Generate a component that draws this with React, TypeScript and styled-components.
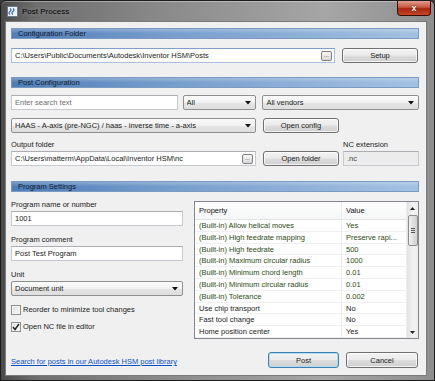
import styled, { createGlobalStyle } from "styled-components";

const GlobalStyle = createGlobalStyle`
  html, body {
    margin: 0;
    padding: 0;
    background: #3a3a3a;
  }
  body {
    font-family: "Liberation Sans", Arial, sans-serif;
    font-size: 7.5px;
    color: #1b1b1b;
  }
  * { box-sizing: border-box; }
`;

const Window = styled.div`
  width: 435px;
  height: 381px;
  display: flex;
  flex-direction: column;
  border: 1px solid #1c1c1c;
  border-radius: 6px 6px 0 0;
  background: linear-gradient(90deg, #4a4a4a 0%, #6e6e6e 8%, #8c8c8c 40%, #a6a6a6 75%, #8e8e8e 100%);
  box-shadow: inset 0 1px 0 rgba(255, 255, 255, 0.35);
`;

const TitleBar = styled.div`
  height: 20px;
  display: flex;
  align-items: center;
  padding-left: 6px;
`;

const Title = styled.span`
  font-size: 8px;
  color: #000;
  margin-left: 4px;
  text-shadow: 0 0 4px rgba(255, 255, 255, 0.35);
`;

const CloseButton = styled.div`
  margin-left: auto;
  margin-right: 3px;
  align-self: flex-start;
  width: 34px;
  height: 15px;
  border: 1px solid #3c0a04;
  border-top: none;
  border-radius: 0 0 4px 4px;
  background: linear-gradient(#e0a090 0%, #c8553c 45%, #a8250e 55%, #c44a2a 100%);
  color: #fff;
  font-weight: bold;
  font-size: 9px;
  display: flex;
  align-items: center;
  justify-content: center;
  text-shadow: 0 0 2px #400;
`;

const Client = styled.div`
  flex: 1;
  margin: 0 7px 4px 4px;
  background: #f0f0f0;
  border: 1px solid #7a7a7a;
  padding: 6px 7px 0 5px;
  display: flex;
  flex-direction: column;
`;

const SectionHeader = styled.div<{ $mt?: number }>`
  height: 11px;
  line-height: 10px;
  padding-left: 6px;
  margin-top: ${(p) => p.$mt ?? 0}px;
  color: #0f1a2a;
  border: 1px solid #7b9ac2;
  background:
    linear-gradient(rgba(255, 255, 255, 0.25), rgba(255, 255, 255, 0) 50%),
    linear-gradient(90deg, #4f7db8 0%, #789ecd 40%, #a4c1e1 100%);
`;

const Row = styled.div<{ $mt?: number; $gap?: number }>`
  display: flex;
  align-items: flex-end;
  gap: ${(p) => p.$gap ?? 7}px;
  margin-top: ${(p) => p.$mt ?? 0}px;
`;

const Field = styled.div<{ $w: number }>`
  width: ${(p) => p.$w}px;
  display: flex;
  flex-direction: column;
`;

const Label = styled.div<{ $mt?: number }>`
  height: 11px;
  line-height: 10px;
  margin-top: ${(p) => p.$mt ?? 0}px;
  white-space: nowrap;
`;

const Box = styled.div<{ $w?: number; $tint?: boolean; $disabled?: boolean }>`
  width: ${(p) => (p.$w ? `${p.$w}px` : "100%")};
  height: 15px;
  display: flex;
  align-items: center;
  padding: 0 2px 0 3px;
  background: ${(p) => (p.$disabled ? "#ececec" : "#fff")};
  border: 1px solid ${(p) => (p.$tint ? "#a9c1dc" : "#c6cad0")};
  border-top-color: ${(p) => (p.$tint ? "#7f9fc6" : "#abadb3")};
  color: ${(p) => (p.$disabled ? "#444" : "#1b1b1b")};
  white-space: nowrap;
  overflow: hidden;
`;

const Placeholder = styled.span`
  color: #6d6d6d;
`;

const Grow = styled.span`
  flex: 1;
  min-width: 0;
  overflow: hidden;
`;

const BrowseButton = styled.span`
  width: 11px;
  height: 10px;
  border: 1px solid #7d7d7d;
  border-radius: 2px;
  background: linear-gradient(#f7f7f7, #d9d9d9);
  font-size: 6px;
  line-height: 6px;
  text-align: center;
  color: #333;
  flex: none;
`;

const Combo = styled.div<{ $w: number }>`
  width: ${(p) => p.$w}px;
  height: 15px;
  display: flex;
  align-items: center;
  padding: 0 4px 0 3px;
  border: 1px solid #8e8f8f;
  border-radius: 2px;
  background: linear-gradient(#fbfbfb 0%, #f1f1f1 50%, #e5e5e5 51%, #dedede 100%);
  white-space: nowrap;
`;

const Arrow = () => (
  <svg width="6" height="4" viewBox="0 0 6 4" style={{ flex: "none" }}>
    <path d="M0 0h6L3 3.5z" fill="#111" />
  </svg>
);

const Button = styled.button<{ $w: number; $primary?: boolean; $h?: number }>`
  width: ${(p) => p.$w}px;
  height: ${(p) => p.$h ?? 15}px;
  padding: 0;
  font: inherit;
  color: #1b1b1b;
  border: 1px solid ${(p) => (p.$primary ? "#3c7fb1" : "#707070")};
  border-radius: 3px;
  background: linear-gradient(#f2f2f2 0%, #ebebeb 48%, #dddddd 52%, #cfcfcf 100%);
  box-shadow: inset 0 0 0 1px ${(p) => (p.$primary ? "rgba(170, 220, 245, 0.9)" : "rgba(255, 255, 255, 0.75)")};
  flex: none;
`;

const Settings = styled.div`
  display: flex;
  justify-content: space-between;
  margin-top: 8px;
`;

const LeftColumn = styled.div`
  width: 172px;
  display: flex;
  flex-direction: column;
`;

const CheckRow = styled.label<{ $mt: number }>`
  display: flex;
  align-items: center;
  gap: 2px;
  height: 11px;
  margin-top: ${(p) => p.$mt}px;
`;

const CheckBox = styled.span`
  width: 10px;
  height: 10px;
  border: 1px solid #8f8f8f;
  background: linear-gradient(135deg, #dcdcdc, #fbfbfb);
  box-shadow: inset 0 0 0 1px #f4f4f4;
  display: flex;
  align-items: center;
  justify-content: center;
`;

const Table = styled.div`
  width: 225px;
  height: 138px;
  margin-top: 1px;
  border: 1px solid #828790;
  background: #fff;
  display: flex;
  overflow: hidden;
`;

const Columns = styled.div`
  flex: 1;
  min-width: 0;
  display: flex;
  flex-direction: column;
`;

const HeadRow = styled.div`
  height: 18px;
  display: flex;
  align-items: center;
  border-bottom: 1px solid #e3e3e3;
  background: linear-gradient(#ffffff, #f5f6f7);
  color: #111;
`;

const DataRow = styled.div<{ $builtin?: boolean }>`
  height: 11.8px;
  display: flex;
  align-items: center;
  border-bottom: 1px solid #f0f0f0;
  color: ${(p) => (p.$builtin ? "#2c4a12" : "#1b1b1b")};
`;

const Cell = styled.div<{ $w?: number }>`
  ${(p) => (p.$w ? `width: ${p.$w}px; flex: none;` : "flex: 1; min-width: 0;")}
  padding: 0 3px 0 4px;
  white-space: nowrap;
  overflow: hidden;
  align-self: stretch;
  line-height: 11px;
  border-right: ${(p) => (p.$w ? "1px solid #ececec" : "none")};
`;

const HeadCell = styled(Cell)`
  line-height: 17px;
`;

const ScrollBar = styled.div`
  width: 12px;
  flex: none;
  display: flex;
  flex-direction: column;
  align-items: center;
  background: linear-gradient(90deg, #e3e3e3, #f3f3f3 60%, #ececec);
  border-left: 1px solid #ececec;
`;

const ScrollArrow = styled.div<{ $mt?: string }>`
  height: 12px;
  display: flex;
  align-items: center;
  justify-content: center;
  margin-top: ${(p) => p.$mt ?? "0"};
`;

const Thumb = styled.div`
  margin-top: 1px;
  width: 10px;
  height: 31px;
  border: 1px solid #8d8d8d;
  border-radius: 2px;
  background: linear-gradient(90deg, #f1f1f1, #e0e0e0 50%, #d2d2d2);
  display: flex;
  flex-direction: column;
  align-items: center;
  justify-content: center;
  gap: 1px;
`;

const Grip = styled.span`
  width: 4px;
  height: 1px;
  background: #555;
`;

const Footer = styled.div`
  margin-top: auto;
  margin-bottom: 7px;
  display: flex;
  align-items: center;
`;

const Link = styled.a`
  color: #0a50c8;
  text-decoration: underline;
  padding-top: 3px;
  cursor: pointer;
`;

const FooterButtons = styled.div`
  margin-left: auto;
  margin-right: 1px;
  display: flex;
  gap: 7px;
`;

const AppIcon = () => (
  <svg width="11" height="11" viewBox="0 0 11 11">
    <rect x="0.5" y="0.5" width="10" height="10" fill="#eef3fb" stroke="#6a7a90" />
    <path d="M3 2.5q2 1.5 0 3t0 3M6 2.5q2 1.5 0 3t0 3" stroke="#2f62c8" strokeWidth="1.2" fill="none" />
  </svg>
);

const properties: { name: string; value: string; builtin?: boolean }[] = [
  { name: "(Built-in) Allow helical moves", value: "Yes", builtin: true },
  { name: "(Built-in) High feedrate mapping", value: "Preserve rapi...", builtin: true },
  { name: "(Built-in) High feedrate", value: "500", builtin: true },
  { name: "(Built-in) Maximum circular radius", value: "1000", builtin: true },
  { name: "(Built-in) Minimum chord length", value: "0.01", builtin: true },
  { name: "(Built-in) Minimum circular radius", value: "0.01", builtin: true },
  { name: "(Built-in) Tolerance", value: "0.002", builtin: true },
  { name: "Use chip transport", value: "No" },
  { name: "Fast tool change", value: "No" },
  { name: "Home position center", value: "Yes" },
];

function App() {
  return (
    <>
      <GlobalStyle />
      <Window>
        <TitleBar>
          <AppIcon />
          <Title>Post Process</Title>
          <CloseButton>x</CloseButton>
        </TitleBar>
        <Client>
          <SectionHeader>Configuration Folder</SectionHeader>
          <Row $mt={9}>
            <Box $w={324} $tint>
              <Grow>C:\Users\Public\Documents\Autodesk\Inventor HSM\Posts</Grow>
              <BrowseButton>...</BrowseButton>
            </Box>
            <Button $w={76}>Setup</Button>
          </Row>

          <SectionHeader $mt={14}>Post Configuration</SectionHeader>
          <Row $mt={7} $gap={5}>
            <Box $w={167}>
              <Placeholder>Enter search text</Placeholder>
            </Box>
            <Combo $w={74}>
              <Grow>All</Grow>
              <Arrow />
            </Combo>
            <Combo $w={157} style={{ marginLeft: 1 }}>
              <Grow>All vendors</Grow>
              <Arrow />
            </Combo>
          </Row>
          <Row $mt={8}>
            <Combo $w={245}>
              <Grow>HAAS - A-axis (pre-NGC) / haas - inverse time - a-axis</Grow>
              <Arrow />
            </Combo>
            <Button $w={76}>Open config</Button>
          </Row>
          <Row $mt={7}>
            <Field $w={245}>
              <Label>Output folder</Label>
              <Box>
                <Grow>C:\Users\matterm\AppData\Local\Inventor HSM\nc</Grow>
                <BrowseButton>...</BrowseButton>
              </Box>
            </Field>
            <Button $w={76}>Open folder</Button>
            <Field $w={76} style={{ marginLeft: -3 }}>
              <Label>NC extension</Label>
              <Box $disabled>.nc</Box>
            </Field>
          </Row>

          <SectionHeader $mt={15}>Program Settings</SectionHeader>
          <Settings>
            <LeftColumn>
              <Label>Program name or number</Label>
              <Box>1001</Box>
              <Label $mt={9}>Program comment</Label>
              <Box>Post Test Program</Box>
              <Label $mt={9}>Unit</Label>
              <Combo $w={172}>
                <Grow>Document unit</Grow>
                <Arrow />
              </Combo>
              <CheckRow $mt={8}>
                <CheckBox />
                Reorder to minimize tool changes
              </CheckRow>
              <CheckRow $mt={6}>
                <CheckBox>
                  <svg width="8" height="8" viewBox="0 0 8 8">
                    <path d="M1 4l2 2.5L7 1" stroke="#222" strokeWidth="1.4" fill="none" />
                  </svg>
                </CheckBox>
                Open NC file in editor
              </CheckRow>
            </LeftColumn>
            <Table>
              <Columns>
                <HeadRow>
                  <HeadCell $w={147}>Property</HeadCell>
                  <HeadCell>Value</HeadCell>
                </HeadRow>
                {properties.map((p) => (
                  <DataRow key={p.name} $builtin={p.builtin}>
                    <Cell $w={147}>{p.name}</Cell>
                    <Cell>{p.value}</Cell>
                  </DataRow>
                ))}
              </Columns>
              <ScrollBar>
                <ScrollArrow>
                  <svg width="5" height="3" viewBox="0 0 5 3">
                    <path d="M0 3h5L2.5 0z" fill="#222" />
                  </svg>
                </ScrollArrow>
                <Thumb>
                  <Grip />
                  <Grip />
                  <Grip />
                </Thumb>
                <ScrollArrow $mt="auto">
                  <svg width="5" height="3" viewBox="0 0 5 3">
                    <path d="M0 0h5L2.5 3z" fill="#222" />
                  </svg>
                </ScrollArrow>
              </ScrollBar>
            </Table>
          </Settings>

          <Footer>
            <Link>Search for posts in our Autodesk HSM post library</Link>
            <FooterButtons>
              <Button $w={71} $h={16} $primary>Post</Button>
              <Button $w={72} $h={16}>Cancel</Button>
            </FooterButtons>
          </Footer>
        </Client>
      </Window>
    </>
  );
}

export default App;
